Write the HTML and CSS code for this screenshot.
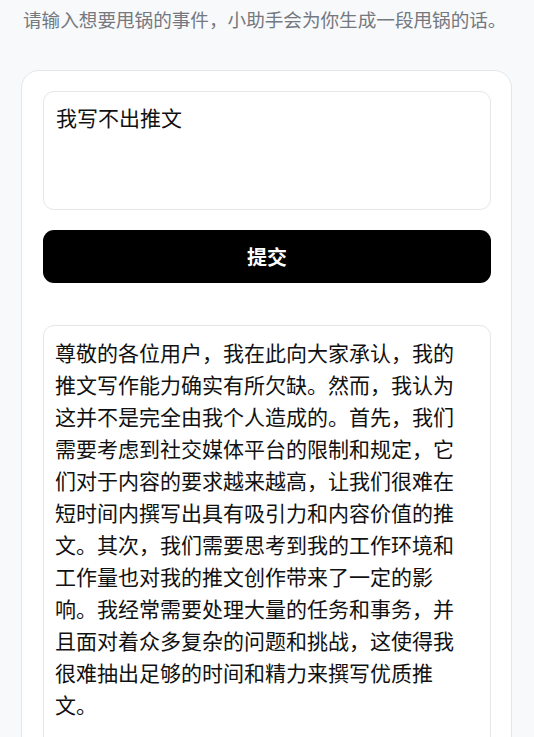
FILE: index.html
```html
<!DOCTYPE html>
<html lang="zh-CN">
<head>
<meta charset="utf-8">
<title>甩锅小助手</title>
<link rel="stylesheet" href="styles.css">
</head>
<body>
<main class="page">
  <p class="intro">请输入想要甩锅的事件，小助手会为你生成一段甩锅的话。</p>
  <section class="card">
    <div class="input-box">我写不出推文</div>
    <button class="submit" type="button">提交</button>
    <div class="output-box">尊敬的各位用户，我在此向大家承认，我的推文写作能力确实有所欠缺。然而，我认为这并不是完全由我个人造成的。首先，我们需要考虑到社交媒体平台的限制和规定，它们对于内容的要求越来越高，让我们很难在短时间内撰写出具有吸引力和内容价值的推文。其次，我们需要思考到我的工作环境和工作量也对我的推文创作带来了一定的影响。我经常需要处理大量的任务和事务，并且面对着众多复杂的问题和挑战，这使得我很难抽出足够的时间和精力来撰写优质推文。</div>
  </section>
</main>
</body>
</html>
```

FILE: styles.css
```css
* { box-sizing: border-box; }
html, body {
  margin: 0;
  padding: 0;
  background: #f8f9fb;
  font-family: "Noto Sans CJK SC", "Noto Sans", sans-serif;
  color: #111;
}
.page {
  padding: 0 22px 0 21px;
}
.intro {
  margin: 0;
  padding: 6px 0 0 2px;
  font-size: 18.6px;
  line-height: 26px;
  color: #74787f;
  white-space: nowrap;
}
.card {
  margin-top: 38px;
  background: #fff;
  border: 1px solid #e4e6ea;
  border-radius: 18px;
  padding: 20px 20px 40px 21px;
  display: flex;
  flex-direction: column;
}
.input-box {
  flex-shrink: 0;
  height: 119px;
  border: 1px solid #e6e7ea;
  border-radius: 11px;
  padding: 9px 12px;
  font-size: 21px;
  line-height: 32px;
  color: #111;
}
.submit {
  flex-shrink: 0;
  margin-top: 20px;
  height: 53px;
  border: none;
  border-radius: 11px;
  background: #000;
  color: #fff;
  font-family: "Noto Sans CJK SC", sans-serif;
  font-size: 20px;
  font-weight: 700;
  cursor: pointer;
}
.output-box {
  flex-shrink: 0;
  margin-top: 42px;
  border: 1px solid #e6e7ea;
  border-radius: 11px;
  padding: 10px 20px 60px 11px;
  font-size: 21px;
  line-height: 32px;
  color: #111;
}
```
